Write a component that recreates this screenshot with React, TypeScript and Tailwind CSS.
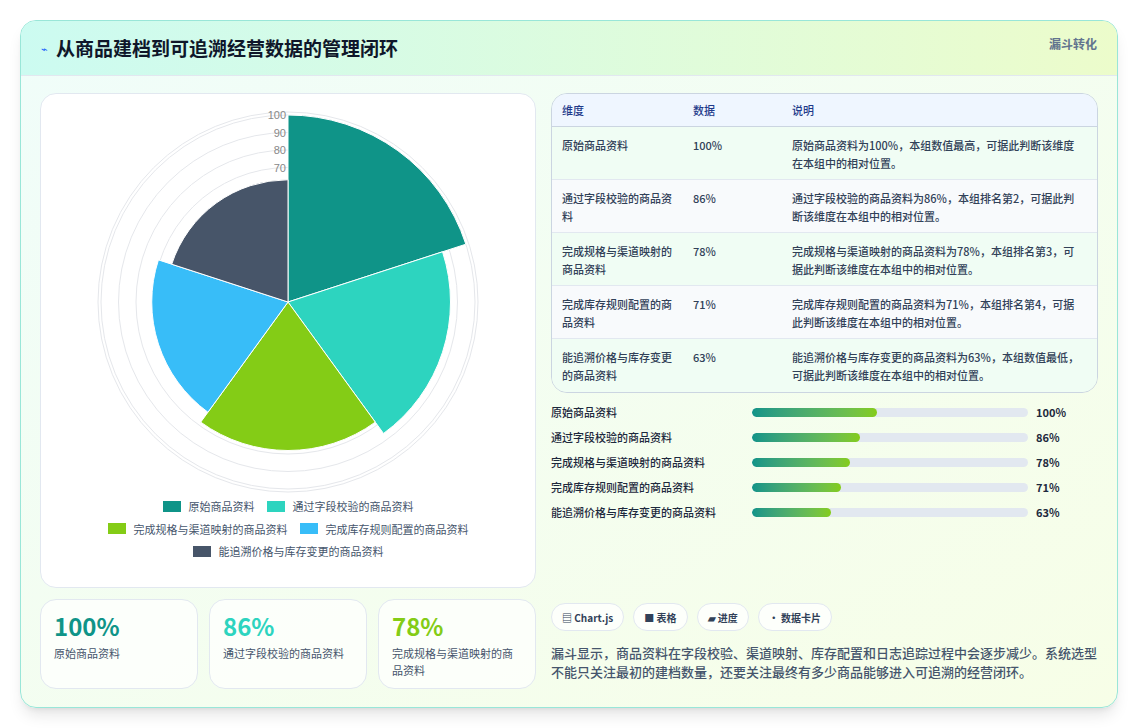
import React from "react";

const data = [
  { name: "原始商品资料", v: 100, c: "#0f9488", rank: "本组数值最高" },
  { name: "通过字段校验的商品资料", v: 86, c: "#2dd4bf", rank: "本组排名第2" },
  { name: "完成规格与渠道映射的商品资料", v: 78, c: "#84cc16", rank: "本组排名第3" },
  { name: "完成库存规则配置的商品资料", v: 71, c: "#38bdf8", rank: "本组排名第4" },
  { name: "能追溯价格与库存变更的商品资料", v: 63, c: "#475569", rank: "本组数值最低" },
];

function Polar() {
  const cx = 248, cy = 208;
  const r = (v: number) => 12 + v * 1.75;
  const pt = (rad: number, deg: number) => {
    const a = ((deg - 90) * Math.PI) / 180;
    return [cx + rad * Math.cos(a), cy + rad * Math.sin(a)];
  };
  return (
    <svg width="496" height="400" className="block">
      {[10, 20, 30, 40, 50, 60, 70, 80, 90, 100].map((v) => (
        <circle key={v} cx={cx} cy={cy} r={r(v)} fill="none" stroke="#e5e7eb" strokeWidth="1" />
      ))}
      <circle cx={cx} cy={cy} r={190} fill="none" stroke="#e5e7eb" strokeWidth="1" />
      {data.map((d, i) => {
        const rr = r(d.v);
        const [x1, y1] = pt(rr, i * 72);
        const [x2, y2] = pt(rr, (i + 1) * 72);
        return <path key={i} d={`M${cx},${cy} L${x1},${y1} A${rr},${rr} 0 0 1 ${x2},${y2} Z`} fill={d.c} stroke="#fff" strokeWidth="1" />;
      })}
      {[70, 80, 90, 100].map((v) => (
        <text key={v} x={cx - 2} y={cy - r(v) + 4} textAnchor="end" fontSize="11" fill="#888" fontFamily="Liberation Sans">{v}</text>
      ))}
    </svg>
  );
}

export default function App() {
  return (
    <div className="w-[1138px] h-[728px] bg-white p-5" style={{ fontFamily: '"Noto Sans CJK SC", "Liberation Sans", sans-serif' }}>
      <div className="h-[688px] rounded-2xl border border-[#99e6d8] overflow-hidden bg-gradient-to-br from-[#f0fdfa] to-[#f7fee7] shadow-lg flex flex-col">
        <div className="h-[55px] flex items-center justify-between px-5 bg-gradient-to-r from-[#ccfbf1] to-[#ecfccb] border-b border-[#e2e8f0]">
          <div className="flex items-center gap-2">
            <span className="text-[11px] text-blue-600">⌁</span>
            <span className="text-[19px] font-bold text-[#0f172a]">从商品建档到可追溯经营数据的管理闭环</span>
          </div>
          <span className="text-xs font-bold text-slate-500 self-start mt-[15px]">漏斗转化</span>
        </div>
        <div className="flex gap-[15px] px-[19px] pt-[17px]">
          <div className="w-[496px] flex flex-col gap-[11px]">
            <div className="h-[495px] bg-white rounded-2xl border border-[#e2e8f0] flex flex-col items-center">
              <Polar />
              <div className="flex flex-col items-center gap-[6px] text-[11px] text-slate-600 mt-[4px]">
                <div className="flex gap-3">
                  {[0, 1].map((i) => (
                    <span key={i} className="flex items-center gap-2"><span className="w-[18px] h-[11px]" style={{ background: data[i].c }} />{data[i].name}</span>
                  ))}
                </div>
                <div className="flex gap-3">
                  {[2, 3].map((i) => (
                    <span key={i} className="flex items-center gap-2"><span className="w-[18px] h-[11px]" style={{ background: data[i].c }} />{data[i].name}</span>
                  ))}
                </div>
                <span className="flex items-center gap-2"><span className="w-[18px] h-[11px]" style={{ background: data[4].c }} />{data[4].name}</span>
              </div>
            </div>
            <div className="grid grid-cols-3 gap-[11px]">
              {data.slice(0, 3).map((d, i) => (
                <div key={i} className="h-[90px] bg-white/70 rounded-2xl border border-[#e2e8f0] pl-[13px] pr-[22px] pt-[10px]">
                  <div className="text-[24px] font-bold leading-[32px]" style={{ color: d.c }}>{d.v}%</div>
                  <div className="text-[11px] text-slate-600 leading-[17px] mt-[3px]">{d.name}</div>
                </div>
              ))}
            </div>
          </div>
          <div className="flex-1 flex flex-col">
            <div className="rounded-2xl border border-[#cbd5e1] overflow-hidden text-[11px] text-slate-700">
              <div className="flex h-[33px] items-center bg-[#eff6ff] text-[#1e3a8a] font-medium border-b border-[#cbd5e1]">
                <div className="w-[141px] pl-[10px]">维度</div>
                <div className="w-[99px]">数据</div>
                <div className="flex-1">说明</div>
              </div>
              {data.map((d, i) => (
                <div key={i} className={`flex h-[53px] pt-[9px] leading-[18px] font-medium ${i % 2 ? "bg-[#f8fafc]" : "bg-[#f0fdf4]"} ${i < 4 ? "border-b border-[#e2e8f0]" : ""}`}>
                  <div className="w-[141px] pl-[10px] pr-3">{d.name}</div>
                  <div className="w-[99px]">{d.v}%</div>
                  <div className="flex-1 pr-3">{d.name}为{d.v}%，{d.rank}，可据此判断该维度在本组中的相对位置。</div>
                </div>
              ))}
            </div>
            <div className="flex flex-col gap-[9px] mt-[11px]">
              {data.map((d, i) => (
                <div key={i} className="flex items-center h-[16px] text-[11px] text-slate-800 font-medium">
                  <div className="w-[201px]">{d.name}</div>
                  <div className="w-[276px] h-[9px] rounded-full bg-[#e2e8f0] overflow-hidden">
                    <div className="h-full rounded-full bg-gradient-to-r from-[#0f9488] to-[#84cc16]" style={{ width: `${d.v * 1.25}px` }} />
                  </div>
                  <div className="ml-2 font-bold">{d.v}%</div>
                </div>
              ))}
            </div>
            <div className="flex gap-[9px] mt-[83px] text-[10px] font-bold text-slate-700">
              {["▤ Chart.js", "■ 表格", "▰ 进度", "• 数据卡片"].map((t) => (
                <span key={t} className="h-[28px] px-[10px] flex items-center rounded-full bg-white/80 border border-[#e2e8f0]">{t}</span>
              ))}
            </div>
            <p className="mt-[12px] text-[13px] leading-[19px] text-slate-600 font-medium">
              漏斗显示，商品资料在字段校验、渠道映射、库存配置和日志追踪过程中会逐步减少。系统选型不能只关注最初的建档数量，还要关注最终有多少商品能够进入可追溯的经营闭环。
            </p>
          </div>
        </div>
      </div>
    </div>
  );
}
